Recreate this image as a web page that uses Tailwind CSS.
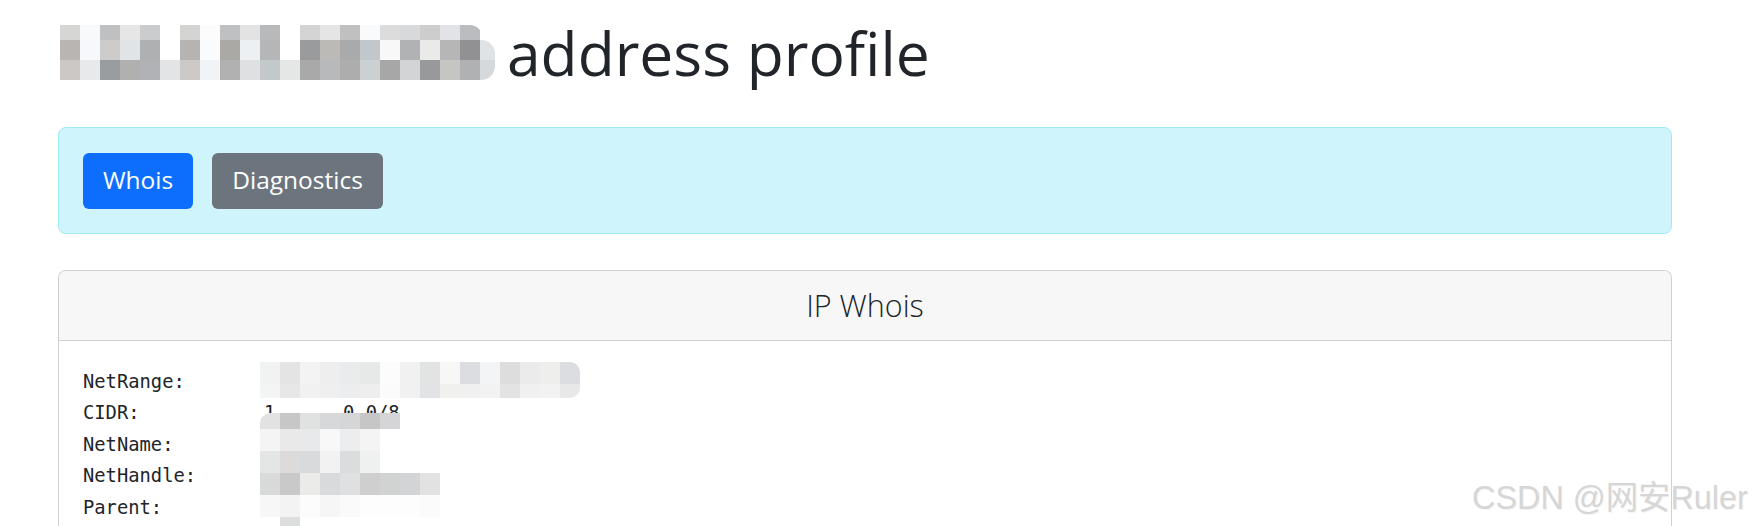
<!DOCTYPE html>
<html lang="en">
<head>
  <meta charset="UTF-8">
  <title>address profile</title>
  <script src="https://cdn.jsdelivr.net/npm/@tailwindcss/browser@4"></script>
</head>
<body class="bg-white h-[526px] overflow-hidden relative font-['Open_Sans','Noto_Sans',sans-serif] text-[#212529]">
  <div class="pl-[58px] w-[1672px]">
    <!-- title -->
    <h1 class="flex items-center h-[105px] text-[60.5px] leading-none">
      <span id="titleMosaic" class="block w-[435px] ml-[2px] mr-[12px]"></span>
      <span class="mt-[2px]">address profile</span>
    </h1>

    <!-- actions -->
    <div class="mt-[22px] h-[107px] flex items-center gap-[19px] px-[24px] bg-[#cff4fc] border border-[#9eeaf9] rounded-lg">
      <a class="w-[110px] h-[56px] flex items-center justify-center rounded-md bg-[#0d6efd] text-white text-[24.5px]">Whois</a>
      <a class="w-[171px] h-[56px] flex items-center justify-center rounded-md bg-[#6c757d] text-white text-[24.5px]">Diagnostics</a>
    </div>

    <!-- whois card, cut off by the bottom of the window -->
    <div class="relative mt-[36px] border border-b-0 border-[#d0d0d0] rounded-t-lg h-[256px] overflow-hidden">
      <div class="h-[70px] flex items-center justify-center bg-[#f7f7f7] border-b border-[#d0d0d0] text-[30.5px] font-light">IP Whois</div>
      <pre class="pt-[25px] pl-[24px] font-['DejaVu_Sans_Mono',monospace] text-[18.8px] leading-[31.4px]">NetRange:
CIDR:           1      0.0/8
NetName:
NetHandle:
Parent:</pre>
      <div id="rangeMosaic" class="absolute left-[201px] top-[91px]"></div>
      <div id="blockMosaic" class="absolute left-[201px] top-[142px]"></div>
    </div>
  </div>

  <div class="absolute left-[1472px] top-[478px] text-[32.4px] leading-[40px] text-[#d6d6d6] whitespace-nowrap font-['Liberation_Sans','Noto_Sans_CJK_SC',sans-serif] [text-shadow:1px_1px_1px_#f2f2f2]">CSDN @网安Ruler</div>

  <script>
    const T = null;

    function drawMosaic(id, rows) {
      const box = document.getElementById(id);
      rows.forEach(function (row) {
        const line = document.createElement('div');
        line.className = 'flex overflow-hidden';
        line.style.height = row.h + 'px';
        if (row.w) line.style.width = row.w + 'px';
        if (row.r) line.style.borderRadius = row.r;
        row.c.forEach(function (color) {
          const tile = document.createElement('div');
          tile.className = 'w-5 h-full shrink-0';
          if (color) tile.style.background = '#' + color;
          line.appendChild(tile);
        });
        box.appendChild(line);
      });
    }

    drawMosaic('titleMosaic', [
      { h: 15, w: 422, r: '0 12px 0 0', c: ['d6d6d5','f8f9fb','bfc0c2','e6e6e6','cbccce','ffffff','d4d4d2','fcfcfd','bfc0c2','e3e3e3','b8b9bb','ffffff','d4d4d4','e4e5e4','c0c0c0','f9fafb','dcdcdc','d8d9db','cdcdcd','e2e3e6','bbbcbf'] },
      { h: 20, w: 435, r: '0 14px 0 0', c: ['b8b5b2','f6f8fc','cdccca','e0e4e6','aeb0b2','ffffff','b6b3b0','fafbfd','aaa9a6','ecf0f2','b4b6b8','ffffff','9a9b9d','bcbab7','a9aaac','c2c7cb','f8f8f8','b1b2b4','eaeae8','b6b6b6','919193','dfe3e6'] },
      { h: 20, w: 435, r: '0 0 14px 0', c: ['cbc8c5','e8e9eb','999da0','b0b0b0','b0b2b5','e3e4e6','ccc9c6','f1f4f6','b1b1b1','dfe0e2','c3c8cb','e5e7e6','a9a9a9','b8b9bb','adadad','cbd0d3','a7a7a7','d2d4d5','98999b','c5c5c2','b0b1b3','d5d9dc'] }
    ]);

    drawMosaic('rangeMosaic', [
      { h: 22, w: 320, r: '0 10px 0 0', c: ['f1f2f2','e4e4e4','f3f3f3','eeeeee','eaebec','e7e8e8','fcfcfc','f1f1f1','e2e4e4','f7f7f5','dcdde0','f3f4f6','dddddd','ebebeb','eeeeec','dcdde0'] },
      { h: 14, w: 320, r: '0 0 10px 0', c: ['f3f4f4','e7e7e7','f1f1f1','efefef','ecedee','eeeeee','fbfbfb','f1f1f1','e2e3e5','f0f0ee','f0f0f0','f2f2f2','e3e3e3','f0f0f0','f2f2f2','e8e8e8'] }
    ]);

    drawMosaic('blockMosaic', [
      { h: 16, w: 140, r: '10px 0 0 0', c: ['e2e2e2','c7c7c7','e0e1e1','d7d8d9','d5d6d8','c6c6c6','d5d5d7'] },
      { h: 22, c: ['f4f4f4','e9e9ea','e8e9eb','f8f8f8','ecedef','f4f4f4'] },
      { h: 22, c: ['e4e5e5','dcdbd9','d9dadc','f2f2f2','dbdcde','eff0f0'] },
      { h: 22, c: ['d8d9d9','c9c9c9','ebebe9','d9dadc','dfe0e2','cfcfcf','d1d2d2','d3d4d6','e2e2e2'] },
      { h: 22, c: ['f7f7f7','f3f3f3','fcfcfc','f6f6f6','fafafa','fdfdfd','fdfdfd','fdfdfd','fbfbfb'] },
      { h: 20, c: [T, 'dcdddd'] }
    ]);
  </script>
</body>
</html>
